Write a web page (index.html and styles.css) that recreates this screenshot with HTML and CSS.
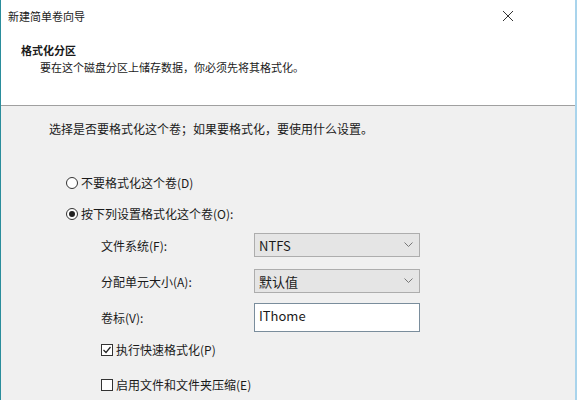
FILE: index.html
```html
<!DOCTYPE html>
<html lang="zh-CN">
<head>
    <meta charset="UTF-8">
    <meta name="viewport" content="width=device-width, initial-scale=1.0">
    <title>新建简单卷向导</title>
    <link rel="stylesheet" href="styles.css">
</head>
<body>
    <div class="window">
        <div class="titlebar">
            <span class="title">新建简单卷向导</span>
            <svg class="close" width="12" height="12" viewBox="0 0 12 12">
                <path d="M1 1 L11 11 M11 1 L1 11" stroke="#333" stroke-width="1" fill="none"/>
            </svg>
        </div>
        <div class="header">
            <div class="header-title">格式化分区</div>
            <div class="header-sub">要在这个磁盘分区上储存数据，你必须先将其格式化。</div>
        </div>
        <div class="content">
            <p class="intro">选择是否要格式化这个卷；如果要格式化，要使用什么设置。</p>

            <div class="option first">
                <span class="radio"></span>
                <span>不要格式化这个卷(D)</span>
            </div>
            <div class="option">
                <span class="radio checked"></span>
                <span>按下列设置格式化这个卷(O):</span>
            </div>

            <div class="form">
                <label>文件系统(F):</label>
                <div class="select">
                    <span>NTFS</span>
                    <svg width="9" height="6" viewBox="0 0 9 6"><path d="M0.5 0.5 L4.5 4.5 L8.5 0.5" stroke="#777" fill="none"/></svg>
                </div>
                <label>分配单元大小(A):</label>
                <div class="select">
                    <span>默认值</span>
                    <svg width="9" height="6" viewBox="0 0 9 6"><path d="M0.5 0.5 L4.5 4.5 L8.5 0.5" stroke="#777" fill="none"/></svg>
                </div>
                <label>卷标(V):</label>
                <div class="textbox">IThome</div>
            </div>

            <div class="check-row first">
                <span class="checkbox">
                    <svg width="10" height="10" viewBox="0 0 10 10"><path d="M1.5 5 L4 7.5 L8.5 2" stroke="#222" stroke-width="1.2" fill="none"/></svg>
                </span>
                <span>执行快速格式化(P)</span>
            </div>
            <div class="check-row">
                <span class="checkbox"></span>
                <span>启用文件和文件夹压缩(E)</span>
            </div>
        </div>
    </div>
</body>
</html>
```

FILE: styles.css
```css
body {
    margin: 0;
    font-family: "Noto Sans CJK SC", "Liberation Sans", sans-serif;
    font-size: 12px;
    color: #1a1a1a;
    background: #fff;
}
.window {
    width: 574px;
    height: 400px;
    overflow: hidden;
    border-left: 1px solid #2a8d9c;
    border-right: 2px solid #a9d4ec;
    background: #f0f0f0;
}
.titlebar {
    height: 32px;
    display: flex;
    align-items: center;
    justify-content: space-between;
    padding: 0 61px 0 7px;
    background: #fff;
}
.title {
    font-size: 11px;
}
.header {
    height: 74px;
    background: #fff;
    border-bottom: 1px solid #a0a0a0;
    padding-top: 10px;
    box-sizing: border-box;
}
.header-title {
    font-weight: bold;
    font-size: 11px;
    padding-left: 20px;
    line-height: 17px;
}
.header-sub {
    font-size: 11px;
    padding-left: 39px;
    line-height: 17px;
}
.content {
    padding-left: 48px;
}
.intro {
    margin: 0;
    padding-top: 14px;
    line-height: 18px;
}
.option {
    display: flex;
    align-items: center;
    gap: 3px;
    height: 31px;
    padding-left: 17px;
}
.option.first {
    margin-top: 29px;
}
.radio {
    width: 12px;
    height: 12px;
    border: 1px solid #333;
    border-radius: 50%;
    background: #fff;
    box-sizing: border-box;
    display: flex;
    align-items: center;
    justify-content: center;
}
.radio.checked::after {
    content: "";
    width: 6px;
    height: 6px;
    border-radius: 50%;
    background: #222;
}
.form {
    display: grid;
    grid-template-columns: 153px 166px;
    grid-auto-rows: 36px;
    align-items: center;
    padding-left: 52px;
    margin-top: -2px;
}
.select {
    height: 24px;
    box-sizing: border-box;
    border: 1px solid #adadad;
    background: #e5e5e5;
    display: flex;
    align-items: center;
    justify-content: space-between;
    padding: 0 6px 0 4px;
    font-size: 13px;
}
.textbox {
    height: 29px;
    box-sizing: border-box;
    border: 1px solid #7a8d9c;
    background: #fff;
    padding: 2px 4px;
    font-size: 13px;
}
.check-row {
    display: flex;
    align-items: center;
    gap: 3px;
    height: 35px;
    padding-left: 52px;
}
.check-row.first {
    margin-top: -3px;
}
.checkbox {
    width: 12px;
    height: 12px;
    border: 1px solid #333;
    background: #fff;
    box-sizing: border-box;
    display: flex;
    align-items: center;
    justify-content: center;
}
```
